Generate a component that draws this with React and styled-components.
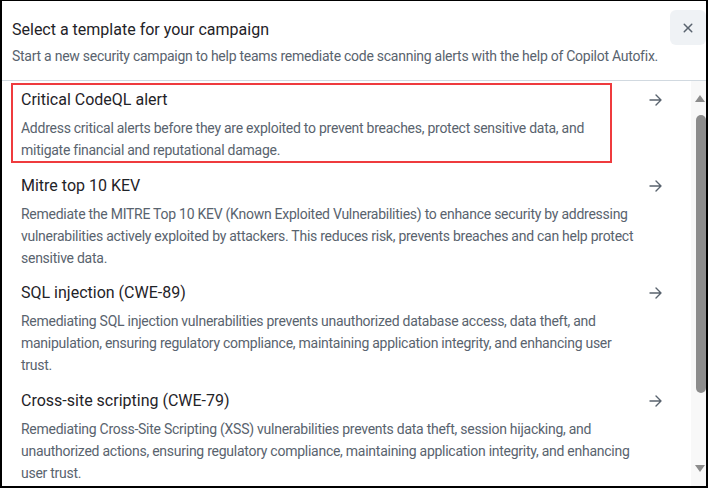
import React from "react";
import styled, { createGlobalStyle } from "styled-components";

const GlobalStyle = createGlobalStyle`
  html, body { margin: 0; padding: 0; background: #ffffff; }
  body { font-family: Roboto, "Liberation Sans", sans-serif; }
  * { box-sizing: border-box; }
`;

const Frame = styled.div`
  width: 708px;
  height: 488px;
  border-style: solid;
  border-color: #000000;
  border-width: 1px 2px 2px 2px;
  background: #ffffff;
  display: flex;
  flex-direction: column;
  overflow: hidden;
`;

const Header = styled.header`
  display: flex;
  align-items: flex-start;
  padding: 9px 0 0 10px;
  height: 80px;
  border-bottom: 1px solid #d1d9e0;
  flex: none;
`;

const HeaderText = styled.div`
  flex: 1;
  padding-top: 8px;
`;

const Title = styled.h1`
  margin: 0;
  font-size: 16px;
  line-height: 24px;
  font-weight: 400;
  color: #1f2328;
`;

const Subtitle = styled.p`
  margin: 4px 0 0;
  font-size: 14px;
  line-height: 20px;
  letter-spacing: -0.26px;
  color: #59636e;
`;

const CloseButton = styled.button`
  width: 36px;
  height: 35px;
  border: none;
  border-radius: 6px;
  background: #eff2f5;
  color: #59636e;
  display: flex;
  align-items: center;
  justify-content: center;
  padding: 0;
  cursor: pointer;
`;

const Body = styled.div`
  flex: 1;
  display: flex;
  min-height: 0;
`;

const List = styled.ul`
  flex: 1;
  margin: 0;
  padding: 1px 0 0;
  list-style: none;
  overflow: hidden;
`;

const Item = styled.li`
  display: grid;
  grid-template-columns: 1fr auto;
  column-gap: 9px;
  padding: 6px 29px 6.5px 19px;
`;

const Content = styled.div`
  min-width: 0;
  ${(p) =>
    p.$highlight &&
    `
    width: 601px;
    border: 2px solid #ef3b3e;
    padding: 3px 8px 0;
    margin: -5px 0 -2px -10px;
  `}
`;

const ItemTitle = styled.div`
  font-size: 16px;
  line-height: 24px;
  color: #1f2328;
`;

const Description = styled.p`
  margin: 5px 0 0;
  font-size: 14px;
  line-height: 22px;
  letter-spacing: -0.26px;
  color: #59636e;
`;

const Arrow = styled.svg`
  align-self: start;
  margin-top: 6px;
  width: 13px;
  height: 12px;
`;

const Scrollbar = styled.div`
  width: 15px;
  flex: none;
  background: #f8f8f8;
  display: flex;
  flex-direction: column;
  padding: 14px 0 14px 4px;
`;

const Triangle = styled.div`
  width: 0;
  height: 0;
  border-left: 5.5px solid transparent;
  border-right: 5.5px solid transparent;
  ${(p) =>
    p.$dir === "up"
      ? `border-bottom: 7px solid #8c8c8c;`
      : `border-top: 7px solid #8c8c8c;`}
`;

const Thumb = styled.div`
  margin: 13px 0 0 1px;
  width: 10px;
  height: 278px;
  border-radius: 5px;
  background: #8c8c8c;
`;

const Spacer = styled.div`
  flex: 1;
`;

const templates = [
  {
    title: "Critical CodeQL alert",
    description:
      "Address critical alerts before they are exploited to prevent breaches, protect sensitive data, and mitigate financial and reputational damage.",
    highlight: true,
  },
  {
    title: "Mitre top 10 KEV",
    description:
      "Remediate the MITRE Top 10 KEV (Known Exploited Vulnerabilities) to enhance security by addressing vulnerabilities actively exploited by attackers. This reduces risk, prevents breaches and can help protect sensitive data.",
  },
  {
    title: "SQL injection (CWE-89)",
    description:
      "Remediating SQL injection vulnerabilities prevents unauthorized database access, data theft, and manipulation, ensuring regulatory compliance, maintaining application integrity, and enhancing user trust.",
  },
  {
    title: "Cross-site scripting (CWE-79)",
    description:
      "Remediating Cross-Site Scripting (XSS) vulnerabilities prevents data theft, session hijacking, and unauthorized actions, ensuring regulatory compliance, maintaining application integrity, and enhancing user trust.",
  },
];

const ArrowIcon = () => (
  <Arrow viewBox="0 0 13 12" fill="none" stroke="#59636e" strokeWidth="1.4" strokeLinecap="round" strokeLinejoin="round">
    <path d="M1 6h11M7 1l5 5-5 5" />
  </Arrow>
);

export default function App() {
  return (
    <>
      <GlobalStyle />
      <Frame>
        <Header>
          <HeaderText>
            <Title>Select a template for your campaign</Title>
            <Subtitle>
              Start a new security campaign to help teams remediate code scanning alerts with the help of Copilot Autofix.
            </Subtitle>
          </HeaderText>
          <CloseButton aria-label="Close">
            <svg width="16" height="16" viewBox="0 0 16 16" fill="currentColor">
              <path d="M3.72 3.72a.75.75 0 0 1 1.06 0L8 6.94l3.22-3.22a.749.749 0 0 1 1.275.326.749.749 0 0 1-.215.734L9.06 8l3.22 3.22a.749.749 0 0 1-.326 1.275.749.749 0 0 1-.734-.215L8 9.06l-3.22 3.220a.751.751 0 0 1-1.042-.018.751.751 0 0 1-.018-1.042L6.94 8 3.72 4.78a.75.75 0 0 1 0-1.06Z" />
            </svg>
          </CloseButton>
        </Header>
        <Body>
          <List>
            {templates.map((t) => (
              <Item key={t.title}>
                <Content $highlight={t.highlight}>
                  <ItemTitle>{t.title}</ItemTitle>
                  <Description>{t.description}</Description>
                </Content>
                <ArrowIcon />
              </Item>
            ))}
          </List>
          <Scrollbar>
            <Triangle $dir="up" />
            <Thumb />
            <Spacer />
            <Triangle $dir="down" />
          </Scrollbar>
        </Body>
      </Frame>
    </>
  );
}
